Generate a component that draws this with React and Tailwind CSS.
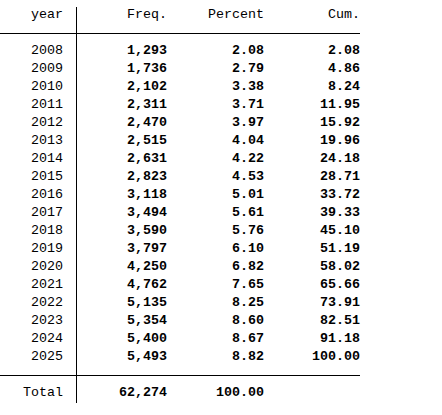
import React from "react";

const rows = [
  ["2008", "1,293", "2.08", "2.08"],
  ["2009", "1,736", "2.79", "4.86"],
  ["2010", "2,102", "3.38", "8.24"],
  ["2011", "2,311", "3.71", "11.95"],
  ["2012", "2,470", "3.97", "15.92"],
  ["2013", "2,515", "4.04", "19.96"],
  ["2014", "2,631", "4.22", "24.18"],
  ["2015", "2,823", "4.53", "28.71"],
  ["2016", "3,118", "5.01", "33.72"],
  ["2017", "3,494", "5.61", "39.33"],
  ["2018", "3,590", "5.76", "45.10"],
  ["2019", "3,797", "6.10", "51.19"],
  ["2020", "4,250", "6.82", "58.02"],
  ["2021", "4,762", "7.65", "65.66"],
  ["2022", "5,135", "8.25", "73.91"],
  ["2023", "5,354", "8.60", "82.51"],
  ["2024", "5,400", "8.67", "91.18"],
  ["2025", "5,493", "8.82", "100.00"],
];

function App() {
  return (
    <div className="w-[442px] h-[415px] bg-white text-black font-['Liberation_Mono',monospace] text-[13.33px] pt-[7px]">
      {/* header */}
      <div className="flex h-[26px]">
        <div className="w-[77px] border-r border-black pr-[13px] text-right leading-[15px]">
          year
        </div>
        <div className="w-[90px] text-right leading-[15px]">Freq.</div>
        <div className="w-[97px] text-right leading-[15px]">Percent</div>
        <div className="w-[96px] text-right leading-[15px]">Cum.</div>
      </div>
      <div className="w-[360px] h-px bg-black" />

      {/* body */}
      <div className="flex">
        <div className="w-[77px] border-r border-black pr-[13px] pt-[8px] pb-[9px] text-right leading-[18px]">
          {rows.map((r) => (
            <div key={r[0]}>{r[0]}</div>
          ))}
        </div>
        <div className="w-[90px] pt-[8px] text-right leading-[18px] font-bold">
          {rows.map((r) => (
            <div key={r[0]}>{r[1]}</div>
          ))}
        </div>
        <div className="w-[97px] pt-[8px] text-right leading-[18px] font-bold">
          {rows.map((r) => (
            <div key={r[0]}>{r[2]}</div>
          ))}
        </div>
        <div className="w-[96px] pt-[8px] text-right leading-[18px] font-bold">
          {rows.map((r) => (
            <div key={r[0]}>{r[3]}</div>
          ))}
        </div>
      </div>
      <div className="w-[360px] h-px bg-black" />

      {/* total */}
      <div className="flex leading-[18px]">
        <div className="w-[77px] border-r border-black pr-[13px] pt-[8px] pb-px text-right">
          Total
        </div>
        <div className="w-[90px] pt-[8px] text-right font-bold">62,274</div>
        <div className="w-[97px] pt-[8px] text-right font-bold">100.00</div>
      </div>
    </div>
  );
}

export default App;
